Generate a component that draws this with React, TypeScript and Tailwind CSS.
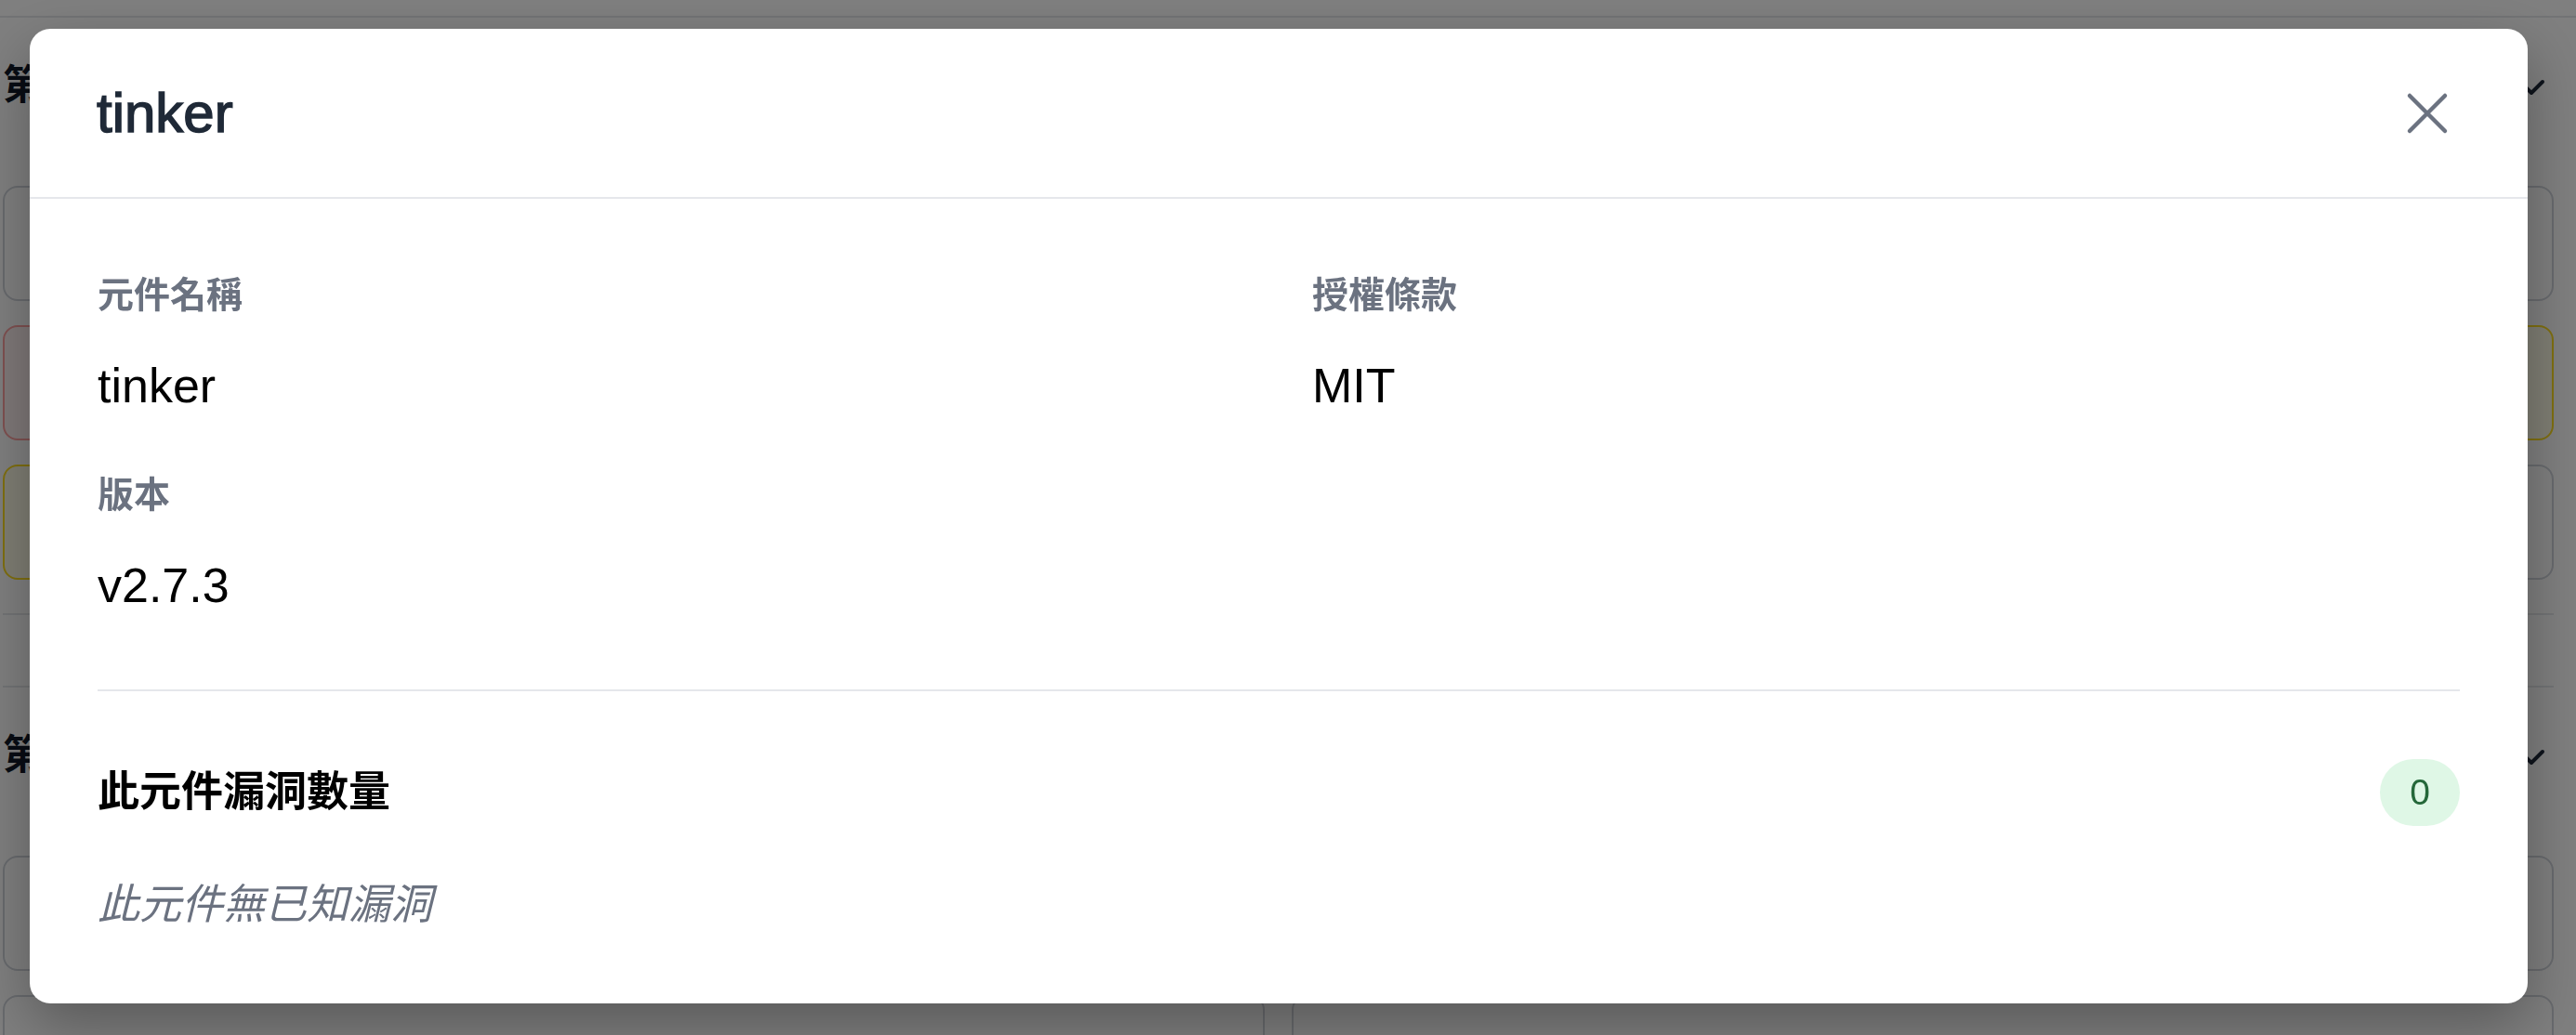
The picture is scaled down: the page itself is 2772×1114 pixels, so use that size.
import React from "react";
import { ChevronDown } from "lucide-react";

const font = "font-['Liberation_Sans','Noto_Sans_CJK_TC',sans-serif]";

type Tone = "gray" | "red" | "yellow";

const toneClass: Record<Tone, string> = {
  gray: "border-gray-300 bg-white",
  red: "border-red-300 bg-red-50",
  yellow: "border-yellow-300 bg-yellow-50",
};

function Card({ tone }: { tone: Tone }) {
  return <div className={`h-[124px] rounded-[16px] border-2 ${toneClass[tone]}`} />;
}

function Section({ title, cards, last }: { title: string; cards: Tone[]; last?: boolean }) {
  return (
    <div className={`pt-[43px] pb-[36px] ${last ? "" : "border-b-2 border-gray-200"}`}>
      <div className="h-[60px] flex items-center justify-between">
        <h2 className="text-[44px] font-bold text-gray-900">{title}</h2>
        <ChevronDown size={48} strokeWidth={2} className="text-gray-800 mt-[4px]" />
      </div>
      <div className="mt-[78px] flex flex-col gap-[26px]">
        {cards.map((t, i) => (
          <Card key={i} tone={t} />
        ))}
      </div>
    </div>
  );
}

function Column({ first, second }: { first: Tone[]; second: Tone[] }) {
  return (
    <div>
      <Section title="第一" cards={first} />
      <div className="mt-[76px] border-t-2 border-gray-200">
        <Section title="第二" cards={second} last />
      </div>
    </div>
  );
}

function Field({ label, value }: { label: string; value: string }) {
  return (
    <div>
      <div className="text-[39px] leading-[58px] font-semibold text-[#6b7280]">{label}</div>
      <div className="mt-[36px] text-[52px] leading-[64px] text-black">{value}</div>
    </div>
  );
}

export default function App() {
  return (
    <div className={`h-screen bg-white overflow-hidden ${font}`}>
      {/* page behind the dialog */}
      <div className="h-[19px] border-b-2 border-gray-200" />
      <div className="grid grid-cols-2 gap-[29px] pl-[3px] pr-[24px]">
        <Column first={["gray", "red", "yellow"]} second={["gray", "gray"]} />
        <Column first={["gray", "yellow", "gray"]} second={["gray", "gray"]} />
      </div>

      {/* overlay */}
      <div className="fixed inset-0 bg-black/50" />

      {/* dialog */}
      <div className="fixed inset-0 pl-[32px] pt-[31px]">
        <div className="w-[2688px] bg-white rounded-[22px] shadow-[0_24px_64px_rgba(0,0,0,0.3)]">
          <div className="h-[183px] px-[72px] flex items-center justify-between border-b-2 border-[#e5e7eb]">
            <h1 className="text-[60px] leading-none font-normal text-[#1f2937] [-webkit-text-stroke:1.5px_#1f2937]">tinker</h1>
            <button className="w-[72px] h-[72px] flex items-center justify-center">
              <svg width="46" height="46" viewBox="0 0 46 46" fill="none" stroke="#6b7280" strokeWidth="4.5" strokeLinecap="round">
                <path d="M4 4L42 42M42 4L4 42" />
              </svg>
            </button>
          </div>

          <div className="px-[73px] pt-[75px] pb-[73px]">
            <div className="grid grid-cols-2 gap-x-[72px] gap-y-[57px]">
              <Field label="元件名稱" value="tinker" />
              <Field label="授權條款" value="MIT" />
              <Field label="版本" value="v2.7.3" />
            </div>

            <div className="mt-[80px] h-[2px] bg-[#e5e7eb]" />

            <div className="mt-[73px] h-[72px] flex items-center justify-between">
              <h3 className="text-[45px] font-bold text-black">此元件漏洞數量</h3>
              <span className="h-[72px] min-w-[86px] px-[24px] rounded-full bg-[#dff7e6] text-[#25683a] text-[39px] flex items-center justify-center">
                0
              </span>
            </div>

            <p className="mt-[52px] text-[45px] leading-[66px] italic text-[#6b7280]">此元件無已知漏洞</p>
          </div>
        </div>
      </div>
    </div>
  );
}
